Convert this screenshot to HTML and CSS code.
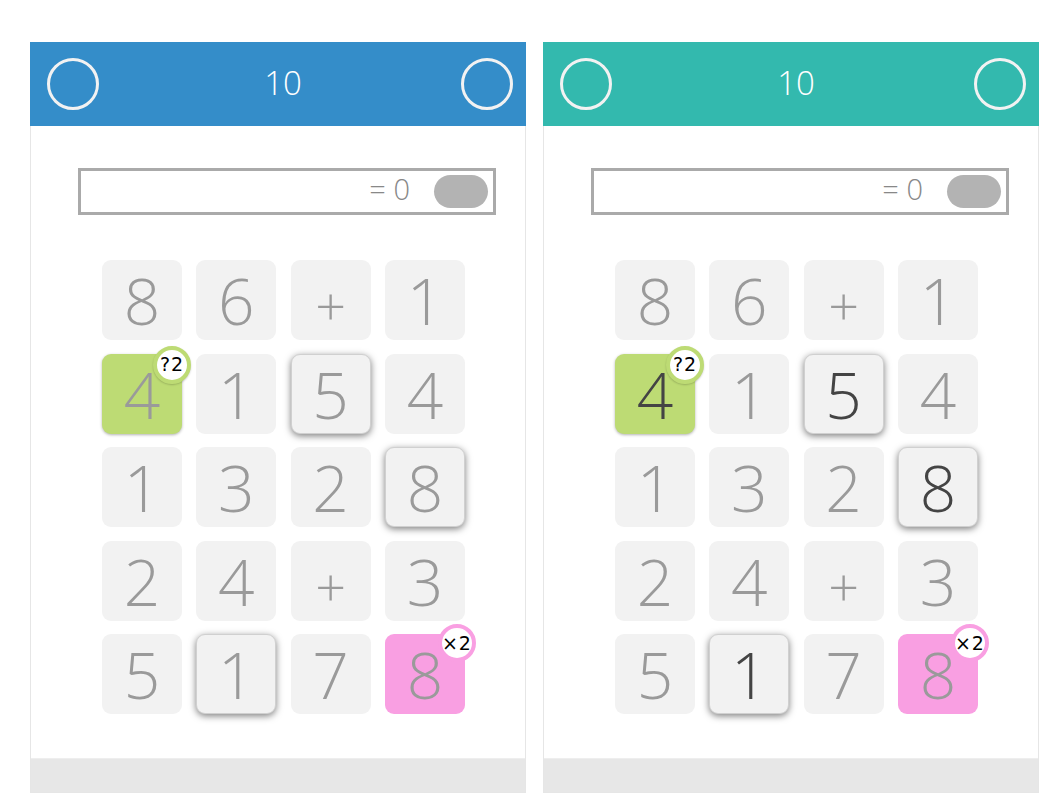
FILE: index.html
```html
<!DOCTYPE html>
<html>
<head>
<meta charset="utf-8">
<link rel="stylesheet" href="styles.css">
</head>
<body>
<div class="page">
  <div class="panel">
    <div class="header blue">
      <span class="ring"></span>
      <span class="title">10</span>
      <span class="ring"></span>
    </div>
    <div class="content">
      <div class="expr">
        <span class="result">= 0</span>
        <span class="toggle"></span>
      </div>
      <div class="grid">
        <div class="tile">8</div><div class="tile">6</div><div class="tile op">+</div><div class="tile">1</div>
        <div class="tile green">4<span class="badge badge-green">?2</span></div><div class="tile">1</div><div class="tile sel">5</div><div class="tile">4</div>
        <div class="tile">1</div><div class="tile">3</div><div class="tile">2</div><div class="tile sel">8</div>
        <div class="tile">2</div><div class="tile">4</div><div class="tile op">+</div><div class="tile">3</div>
        <div class="tile">5</div><div class="tile sel">1</div><div class="tile">7</div><div class="tile pink">8<span class="badge badge-pink">×2</span></div>
      </div>
    </div>
    <div class="footer"></div>
  </div>
  <div class="panel">
    <div class="header teal">
      <span class="ring"></span>
      <span class="title">10</span>
      <span class="ring"></span>
    </div>
    <div class="content">
      <div class="expr">
        <span class="result">= 0</span>
        <span class="toggle"></span>
      </div>
      <div class="grid">
        <div class="tile">8</div><div class="tile">6</div><div class="tile op">+</div><div class="tile">1</div>
        <div class="tile green dark">4<span class="badge badge-green">?2</span></div><div class="tile">1</div><div class="tile sel dark">5</div><div class="tile">4</div>
        <div class="tile">1</div><div class="tile">3</div><div class="tile">2</div><div class="tile sel dark">8</div>
        <div class="tile">2</div><div class="tile">4</div><div class="tile op">+</div><div class="tile">3</div>
        <div class="tile">5</div><div class="tile sel dark">1</div><div class="tile">7</div><div class="tile pink">8<span class="badge badge-pink">×2</span></div>
      </div>
    </div>
    <div class="footer"></div>
  </div>
</div>
</body>
</html>
```

FILE: styles.css
```css
html, body {
  margin: 0;
  padding: 0;
  background: #ffffff;
}

body {
  font-family: "Open Sans", "DejaVu Sans", sans-serif;
}

.page {
  display: flex;
  gap: 17px;
  padding: 42px 0 0 30px;
}

.panel {
  width: 494px;
  height: 749px;
  border: 1px solid #e6e6e6;
  display: flex;
  flex-direction: column;
  background: #ffffff;
}

.header {
  height: 84px;
  margin: -1px -1px 0 -1px;
  display: flex;
  align-items: center;
  justify-content: space-between;
  padding: 0 13px 0 17px;
  box-sizing: border-box;
}

.blue { background: #348dc9; }
.teal { background: #33b9ae; }

.ring {
  width: 46px;
  height: 46px;
  border: 3.5px solid #f2f2f2;
  border-radius: 50%;
}

.title {
  color: #ffffff;
  font-size: 33px;
  font-weight: 300;
  line-height: 1;
  margin-left: 6px;
  margin-top: -4px;
}

.content {
  flex: 1;
  display: flex;
  flex-direction: column;
  align-items: flex-start;
}

.expr {
  margin: 42px 0 0 47px;
  width: 407px;
  height: 41px;
  border: 3px solid #aaaaaa;
  display: flex;
  align-items: center;
  justify-content: flex-end;
  padding-right: 5px;
  box-sizing: content-box;
}

.result {
  color: #888888;
  font-size: 29px;
  font-weight: 300;
  line-height: 1;
  margin-right: 24px;
  margin-top: -6px;
}

.toggle {
  width: 54px;
  height: 33px;
  border-radius: 17px;
  background: #b3b3b3;
}

.grid {
  margin: 45px 0 0 71px;
  display: grid;
  grid-template-columns: repeat(4, 80px);
  grid-auto-rows: 80px;
  column-gap: 14.3px;
  row-gap: 13.5px;
}

.tile {
  position: relative;
  background: #f2f2f2;
  border-radius: 9px;
  display: flex;
  align-items: center;
  justify-content: center;
  color: #9a9a9a;
  font-size: 64px;
  font-weight: 300;
  line-height: 1;
  padding-top: 2px;
  box-sizing: border-box;
}

.tile.op {
  font-size: 54px;
  padding-top: 10px;
}

.tile.sel {
  box-shadow: 0 2px 7px rgba(0, 0, 0, 0.5);
  border: 1px solid #d0d0d0;
}

.tile.green {
  background: #bddb74;
  box-shadow: 0 1px 3px rgba(0, 0, 0, 0.3);
}

.tile.pink {
  background: #f99fe2;
}

.tile.dark {
  color: #444444;
}

.badge {
  position: absolute;
  top: -8px;
  right: -9px;
  width: 30px;
  height: 30px;
  border-radius: 50%;
  background: #ffffff;
  color: #000000;
  font-size: 19px;
  font-weight: 400;
  display: flex;
  align-items: center;
  justify-content: center;
  letter-spacing: 1px;
  font-family: "DejaVu Sans", sans-serif;
}

.badge-green {
  border: 4px solid #bddb74;
  box-shadow: 0 1px 2px rgba(0, 0, 0, 0.2);
}

.badge-pink {
  border: 4px solid #f99fe2;
  top: -10px;
  right: -11px;
}

.footer {
  height: 33px;
  background: #e7e7e7;
  border-top: 1px solid #eeeeee;
}
```
